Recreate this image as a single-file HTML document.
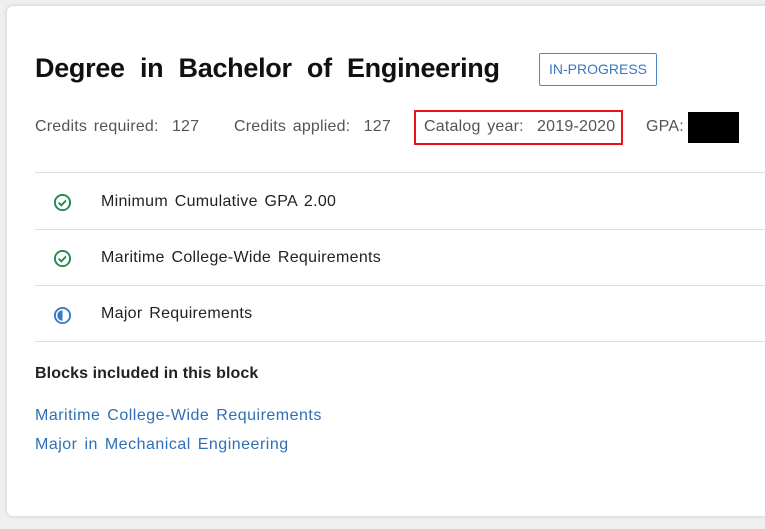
<!DOCTYPE html>
<html><head><style>
body{margin:0;width:765px;height:529px;background:#efefef;font-family:"Liberation Sans",sans-serif;overflow:hidden;position:relative}
.card{position:absolute;left:7px;top:6px;width:770px;height:510px;background:#fff;border-radius:6px;box-shadow:0 0 4px rgba(0,0,0,.15)}
.abs{position:absolute;white-space:nowrap}
h1{position:absolute;left:35px;top:53px;margin:0;font-size:27px;font-weight:bold;color:#111;word-spacing:8px;letter-spacing:-0.3px;white-space:nowrap}
.badge{position:absolute;left:539px;top:53px;border:1px solid #4a86c8;border-radius:2px;color:#3a78bf;font-size:14px;line-height:31px;text-align:center;box-sizing:border-box;width:118px;height:33px}
.stat{position:absolute;top:118px;font-size:16px;color:#555;word-spacing:2px;letter-spacing:0.2px;white-space:nowrap}
.line{position:absolute;left:35px;right:0;height:1px;background:#ddd}
.item{position:absolute;left:101px;font-size:16px;color:#222;word-spacing:2px;letter-spacing:0.3px;white-space:nowrap}
.link{position:absolute;left:35px;font-size:16px;color:#2f6fb5;word-spacing:2px;letter-spacing:0.5px;white-space:nowrap}
</style></head><body>
<div class="card"></div>
<h1>Degree in Bachelor of Engineering</h1>
<div class="badge">IN-PROGRESS</div>
<div class="stat" style="left:35px">Credits required:&nbsp; 127</div>
<div class="stat" style="left:234px">Credits applied:&nbsp; 127</div>
<div class="abs" style="left:414px;top:110px;width:209px;height:35px;border:2px solid #e8141a;box-sizing:border-box"></div>
<div class="stat" style="left:424px">Catalog year:&nbsp; 2019-2020</div>
<div class="stat" style="left:646px">GPA:</div>
<div class="abs" style="left:688px;top:112px;width:51px;height:31px;background:#000"></div>
<div class="line" style="top:172px"></div>
<div class="line" style="top:229px"></div>
<div class="line" style="top:285px"></div>
<div class="line" style="top:341px"></div>
<svg class="abs" style="left:53px;top:193px" width="19" height="19" viewBox="0 0 20 20"><circle cx="10" cy="10" r="8" fill="none" stroke="#1e8a4c" stroke-width="2"/><path d="M6 10.2l2.7 2.7 5-5" fill="none" stroke="#1e8a4c" stroke-width="2"/></svg>
<div class="item" style="top:193px">Minimum Cumulative GPA 2.00</div>
<svg class="abs" style="left:53px;top:249px" width="19" height="19" viewBox="0 0 20 20"><circle cx="10" cy="10" r="8" fill="none" stroke="#1e8a4c" stroke-width="2"/><path d="M6 10.2l2.7 2.7 5-5" fill="none" stroke="#1e8a4c" stroke-width="2"/></svg>
<div class="item" style="top:249px">Maritime College-Wide Requirements</div>
<svg class="abs" style="left:53px;top:306px" width="19" height="19" viewBox="0 0 20 20"><circle cx="10" cy="10" r="8" fill="none" stroke="#3a78c4" stroke-width="2"/><path d="M10 4.5a5.5 5.5 0 0 0 0 11z" fill="#3a78c4"/></svg>
<div class="item" style="top:305px">Major Requirements</div>
<div class="abs" style="left:35px;top:365px;font-size:16px;font-weight:bold;color:#222;letter-spacing:0.1px">Blocks included in this block</div>
<div class="link" style="top:407px">Maritime College-Wide Requirements</div>
<div class="link" style="top:436px">Major in Mechanical Engineering</div>
</body></html>
